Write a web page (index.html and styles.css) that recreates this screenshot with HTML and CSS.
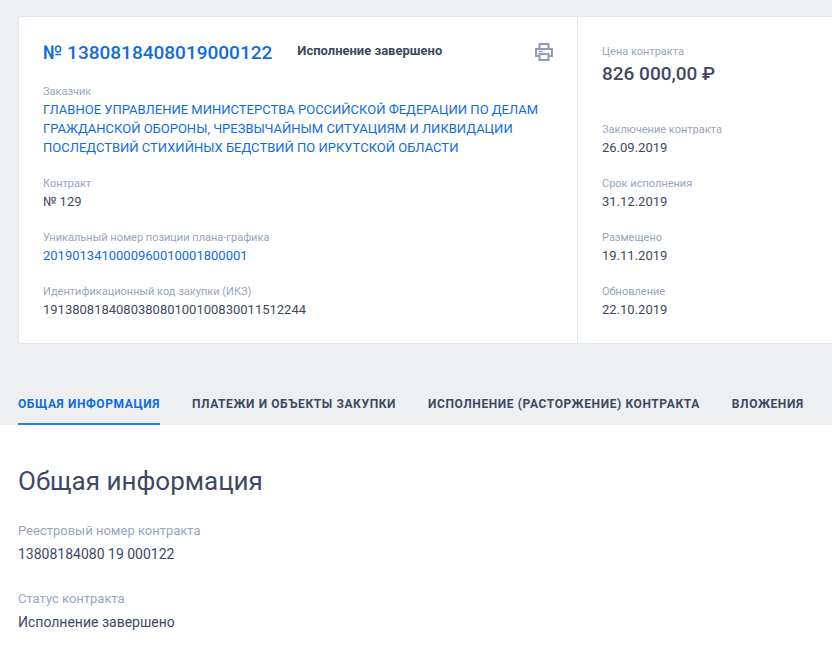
FILE: index.html
```html
<!DOCTYPE html>
<html lang="ru">
<head>
    <meta charset="UTF-8">
    <title>Контракт № 1380818408019000122</title>
    <link rel="stylesheet" href="styles.css">
</head>
<body>
    <div class="top">
        <div class="card">
            <div class="card-main">
                <div class="card-head">
                    <a href="#" class="number">№ 1380818408019000122</a>
                    <span class="status">Исполнение завершено</span>
                    <svg class="print" width="18" height="18" viewBox="0 0 18 18" fill="none" stroke="#8f9bb9" stroke-width="2">
                        <path d="M4.5 6V1h9v5"/>
                        <path d="M4.5 13H1V6h16v7h-3.5"/>
                        <path d="M4.5 11h9v6h-9z"/>
                        <path d="M4 8.500h3.500" stroke-width="1.500"/>
                    </svg>
                </div>
                <div class="field">
                    <div class="label">Заказчик</div>
                    <a href="#" class="link customer">ГЛАВНОЕ УПРАВЛЕНИЕ МИНИСТЕРСТВА РОССИЙСКОЙ ФЕДЕРАЦИИ ПО ДЕЛАМ ГРАЖДАНСКОЙ ОБОРОНЫ, ЧРЕЗВЫЧАЙНЫМ СИТУАЦИЯМ И ЛИКВИДАЦИИ ПОСЛЕДСТВИЙ СТИХИЙНЫХ БЕДСТВИЙ ПО ИРКУТСКОЙ ОБЛАСТИ</a>
                </div>
                <div class="field">
                    <div class="label">Контракт</div>
                    <div class="value">№ 129</div>
                </div>
                <div class="field">
                    <div class="label">Уникальный номер позиции плана-графика</div>
                    <a href="#" class="link">2019013410000960010001800001</a>
                </div>
                <div class="field">
                    <div class="label">Идентификационный код закупки (ИКЗ)</div>
                    <div class="value">191380818408038080100100830011512244</div>
                </div>
            </div>
            <div class="card-side">
                <div class="price-block">
                    <div class="label">Цена контракта</div>
                    <div class="price">826 000,00 ₽</div>
                </div>
                <div class="field">
                    <div class="label">Заключение контракта</div>
                    <div class="value">26.09.2019</div>
                </div>
                <div class="field">
                    <div class="label">Срок исполнения</div>
                    <div class="value">31.12.2019</div>
                </div>
                <div class="field">
                    <div class="label">Размещено</div>
                    <div class="value">19.11.2019</div>
                </div>
                <div class="field">
                    <div class="label">Обновление</div>
                    <div class="value">22.10.2019</div>
                </div>
            </div>
        </div>
        <nav class="tabs">
            <a href="#" class="tab active">Общая информация</a>
            <a href="#" class="tab">Платежи и объекты закупки</a>
            <a href="#" class="tab">Исполнение (расторжение) контракта</a>
            <a href="#" class="tab">Вложения</a>
        </nav>
    </div>
    <div class="content">
        <h2>Общая информация</h2>
        <div class="info">
            <div class="info-label">Реестровый номер контракта</div>
            <div class="info-value">13808184080 19 000122</div>
        </div>
        <div class="info">
            <div class="info-label">Статус контракта</div>
            <div class="info-value">Исполнение завершено</div>
        </div>
    </div>
</body>
</html>
```

FILE: styles.css
```css
body {
    font-family: Roboto, Arial, sans-serif;
    margin: 0;
    padding: 0;
    height: 648px;
    overflow: hidden;
    background-color: #fff;
    color: #3d4963;
}
a {
    text-decoration: none;
}
.top {
    background-color: #eeeff1;
    padding: 16px 0 0 18px;
}
.card {
    display: flex;
    width: 830px;
    height: 328px;
    background: #fff;
    border: 1px solid #dde5f0;
    border-radius: 3px;
    box-sizing: border-box;
}
.card-main {
    width: 559px;
    box-sizing: border-box;
    padding: 24px 24px 0 24px;
    border-right: 1px solid #dde5f0;
}
.card-side {
    padding: 27px 0 0 24px;
}
.card-head {
    display: flex;
    align-items: flex-start;
    height: 43px;
}
.number {
    font-size: 19px;
    line-height: 24px;
    font-weight: 500;
    color: #0f6cde;
}
.status {
    margin-left: 25px;
    font-size: 13px;
    line-height: 20px;
    font-weight: 700;
}
.print {
    margin-left: auto;
    margin-top: 2px;
}
.field {
    margin-bottom: 19px;
}
.label {
    font-size: 11px;
    line-height: 16px;
    color: #99a4bf;
}
.value,
.link {
    display: block;
    font-size: 13px;
    line-height: 19px;
}
.link {
    color: #0f6cde;
}
.customer {
    width: 510px;
}
.price-block {
    height: 78px;
}
.price {
    font-size: 19px;
    line-height: 28px;
    font-weight: 500;
}
.tabs {
    display: flex;
    gap: 32px;
    margin-top: 40px;
    height: 41px;
    white-space: nowrap;
}
.tab {
    font-size: 12px;
    line-height: 20px;
    font-weight: 700;
    letter-spacing: 0.6px;
    text-transform: uppercase;
    color: #3d4963;
    box-sizing: border-box;
    height: 41px;
    padding-top: 10px;
}
.tab.active {
    color: #0f6cde;
    border-bottom: 2px solid #1a81e0;
}
.content {
    padding: 40px 18px 0;
}
h2 {
    margin: 0 0 24px;
    font-size: 26px;
    line-height: 32px;
    font-weight: 400;
}
.info {
    margin-bottom: 25px;
}
.info-label {
    font-size: 13px;
    line-height: 20px;
    color: #99a4bf;
}
.info-value {
    font-size: 14px;
    line-height: 20px;
    margin-top: 3px;
}
```
